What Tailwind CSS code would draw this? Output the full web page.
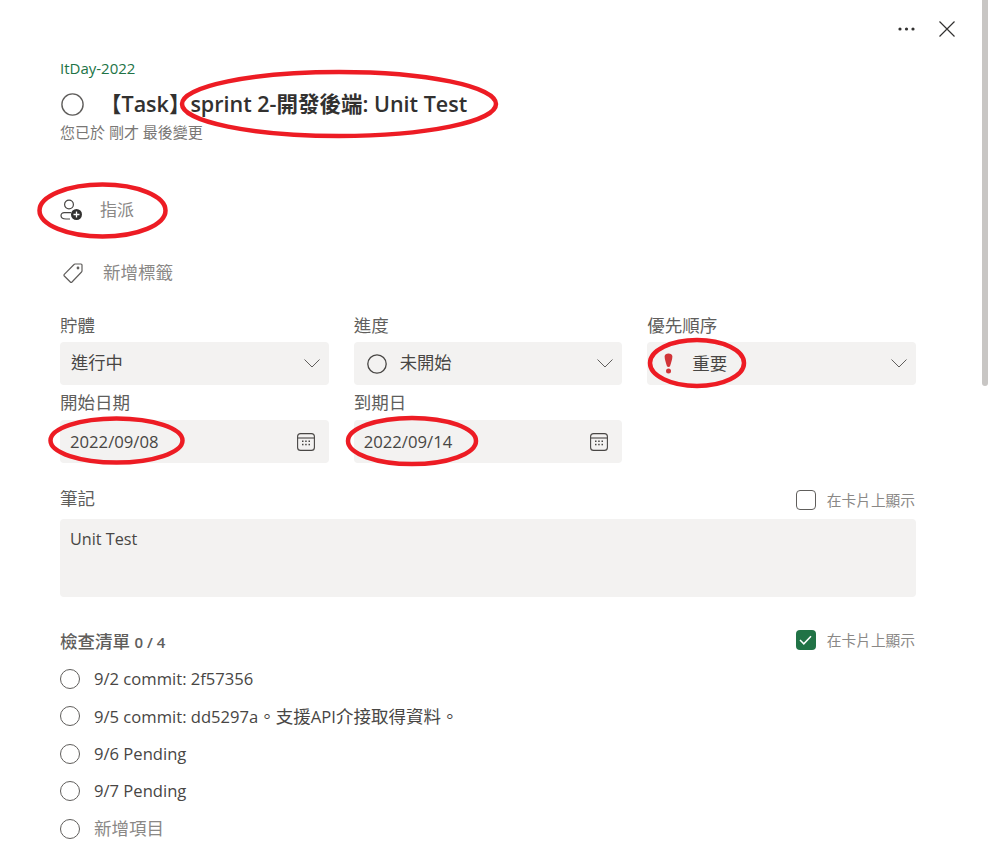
<!DOCTYPE html>
<html lang="zh-Hant">
<head>
    <meta charset="UTF-8">
    <meta name="viewport" content="width=device-width, initial-scale=1.0">
    <title>Task details</title>
    <script src="https://cdn.jsdelivr.net/npm/@tailwindcss/browser@4"></script>
</head>
<body class="bg-white">
<div class="relative w-[988px] h-[855px] overflow-hidden bg-white text-[#323130] [font-family:'Open_Sans','Noto_Sans_CJK_TC',sans-serif]">

    <!-- scrollbar -->
    <div class="absolute top-0 right-0 w-[6px] h-[386px] bg-[#c8c6c4] rounded-b-[3px]"></div>

    <!-- top actions -->
    <div class="h-[58px] pb-[1px] flex items-center justify-end gap-[24px] pr-[33px]">
        <svg class="w-[17px] h-[4px]" viewBox="0 0 17 4" fill="#323130"><circle cx="2" cy="2" r="1.6"/><circle cx="8.5" cy="2" r="1.6"/><circle cx="15" cy="2" r="1.6"/></svg>
        <svg class="w-[16px] h-[16px]" viewBox="0 0 16 16" stroke="#323130" stroke-width="1.2" fill="none"><path d="M.5.5l15 15M15.5.5l-15 15"/></svg>
    </div>

    <div class="w-[916px] pl-[60px]">
        <div class="h-[22px] pb-[2px] flex items-center text-[15px] font-medium text-[#217346]">ItDay-2022</div>

        <div class="mt-[8px] h-[32px] flex items-center">
            <svg class="w-[23px] h-[23px] ml-[1px]" viewBox="0 0 23 23" fill="none" stroke="#605e5c" stroke-width="1.4"><circle cx="11.5" cy="11.5" r="10.6"/></svg>
            <div class="ml-[16px] text-[21.5px] font-semibold whitespace-nowrap">【Task】sprint 2-開發後端: Unit Test</div>
        </div>

        <div class="mt-[2px] h-[22px] pb-[1px] flex items-center text-[15px] text-[#797775]">您已於 剛才 最後變更</div>

        <div class="mt-[46px] h-[40px] flex items-center text-[#8a8886]">
            <svg class="w-[23px] h-[22px]" viewBox="0 0 23 22" fill="none" stroke="#484644" stroke-width="1.2">
                <circle cx="9" cy="5.5" r="4.4"/>
                <path d="M11 13.6H4.2C2.4 13.6 1 14.8 1 16.5S2.4 20 6 20h4"/>
                <circle cx="16.5" cy="15.5" r="5.5" fill="#323130" stroke="none"/>
                <path d="M16.5 12.5v6M13.5 15.5h6" stroke="#fff" stroke-width="1.3"/>
            </svg>
            <span class="ml-[17px] text-[17px]">指派</span>
        </div>

        <div class="mt-[23px] h-[40px] flex items-center text-[#8a8886]">
            <svg class="w-[22px] h-[22px] ml-[2px]" viewBox="0 0 22 22" fill="none" stroke="#605e5c" stroke-width="1.2">
                <path d="M13 2h6a1 1 0 0 1 1 1v6a1.5 1.5 0 0 1-.5 1L10 20a1.2 1.2 0 0 1-1.7 0L2.3 14a1.2 1.2 0 0 1 0-1.7L12 2.5A1.5 1.5 0 0 1 13 2z"/>
                <circle cx="16" cy="6" r=".8" fill="#605e5c"/>
            </svg>
            <span class="ml-[19px] pb-[1px] text-[17.5px]">新增標籤</span>
        </div>

        <!-- fields -->
        <div class="mt-[22px] grid grid-cols-3 gap-x-[25px]">
            <div>
                <div class="h-[22px] pb-[1px] flex items-center text-[17.5px] text-[#605e5c]">貯體</div>
                <div class="mt-[5px] h-[43px] bg-[#f3f2f1] rounded-[4px] flex items-center justify-between pl-[11px] pr-[9px] text-[17.3px] text-[#484644]">
                    <span class="pb-[1px]">進行中</span>
                    <svg class="w-[16px] h-[9px]" viewBox="0 0 16 9" fill="none" stroke="#605e5c" stroke-width="1"><path d="M.5.5L8 8l7.5-7.5"/></svg>
                </div>
            </div>
            <div>
                <div class="h-[22px] pb-[1px] flex items-center text-[17.5px] text-[#605e5c]">進度</div>
                <div class="mt-[5px] h-[43px] bg-[#f3f2f1] rounded-[4px] flex items-center justify-between pl-[13px] pr-[9px] text-[17.3px] text-[#484644]">
                    <span class="flex items-center gap-[13px]">
                        <svg class="w-[20px] h-[20px]" viewBox="0 0 20 20" fill="none" stroke="#484644" stroke-width="1.3"><circle cx="10" cy="10" r="9.2"/></svg>
                        <span class="pb-[1px]">未開始</span>
                    </span>
                    <svg class="w-[16px] h-[9px]" viewBox="0 0 16 9" fill="none" stroke="#605e5c" stroke-width="1"><path d="M.5.5L8 8l7.5-7.5"/></svg>
                </div>
            </div>
            <div>
                <div class="h-[22px] pb-[1px] flex items-center text-[17.5px] text-[#605e5c]">優先順序</div>
                <div class="mt-[5px] h-[43px] bg-[#f3f2f1] rounded-[4px] flex items-center justify-between pl-[17px] pr-[9px] text-[17.5px] text-[#484644]">
                    <span class="flex items-center gap-[19px]">
                        <svg class="w-[9px] h-[21px]" viewBox="0 0 9 21" fill="#d13438"><path d="M.6 3.6C.6 1.5 2.4.4 4.5.4s3.9 1.1 3.9 3.2c0 3-1.7 7.4-2.4 9.7-.4 1-2.6 1-3 0C2.3 11 .6 6.6.6 3.6z"/><circle cx="4.5" cy="18" r="2.5"/></svg>
                        <span class="pb-[1px]">重要</span>
                    </span>
                    <svg class="w-[16px] h-[9px]" viewBox="0 0 16 9" fill="none" stroke="#605e5c" stroke-width="1"><path d="M.5.5L8 8l7.5-7.5"/></svg>
                </div>
            </div>

            <div class="mt-[7px]">
                <div class="h-[22px] pb-[1px] flex items-center text-[17.5px] text-[#605e5c]">開始日期</div>
                <div class="mt-[6px] h-[43px] bg-[#f3f2f1] rounded-[4px] flex items-center justify-between pl-[10px] pr-[14px] text-[16.7px] text-[#484644]">
                    <span>2022/09/08</span>
                    <svg class="w-[18px] h-[18px]" viewBox="0 0 18 18" fill="none" stroke="#484644" stroke-width="1.1"><rect x=".6" y=".6" width="16.8" height="16.8" rx="3"/><path d="M.6 5h16.8"/><g fill="#484644" stroke="none"><rect x="5" y="7.5" width="1.5" height="1.5"/><rect x="8.2" y="7.5" width="1.5" height="1.5"/><rect x="11.5" y="7.5" width="1.5" height="1.5"/><rect x="5" y="10.8" width="1.5" height="1.5"/><rect x="8.2" y="10.8" width="1.5" height="1.5"/><rect x="11.5" y="10.8" width="1.5" height="1.5"/></g></svg>
                </div>
            </div>
            <div class="mt-[7px]">
                <div class="h-[22px] pb-[1px] flex items-center text-[17.5px] text-[#605e5c]">到期日</div>
                <div class="mt-[6px] h-[43px] bg-[#f3f2f1] rounded-[4px] flex items-center justify-between pl-[10px] pr-[14px] text-[16.7px] text-[#484644]">
                    <span>2022/09/14</span>
                    <svg class="w-[18px] h-[18px]" viewBox="0 0 18 18" fill="none" stroke="#484644" stroke-width="1.1"><rect x=".6" y=".6" width="16.8" height="16.8" rx="3"/><path d="M.6 5h16.8"/><g fill="#484644" stroke="none"><rect x="5" y="7.5" width="1.5" height="1.5"/><rect x="8.2" y="7.5" width="1.5" height="1.5"/><rect x="11.5" y="7.5" width="1.5" height="1.5"/><rect x="5" y="10.8" width="1.5" height="1.5"/><rect x="8.2" y="10.8" width="1.5" height="1.5"/><rect x="11.5" y="10.8" width="1.5" height="1.5"/></g></svg>
                </div>
            </div>
        </div>

        <!-- notes -->
        <div class="mt-[24px] h-[22px] flex items-center justify-between">
            <span class="text-[17.5px] text-[#605e5c]">筆記</span>
            <span class="flex items-center gap-[11px] pr-[1px] translate-y-[2px] text-[14.7px] text-[#8a8886]">
                <span class="w-[20px] h-[20px] rounded-[4px] border-[1.5px] border-[#605e5c]"></span>
                在卡片上顯示
            </span>
        </div>
        <div class="mt-[10px] h-[78px] bg-[#f3f2f1] rounded-[4px] px-[10px] pt-[8px] text-[16.2px] leading-[24px] text-[#484644]">Unit Test</div>

        <!-- checklist -->
        <div class="mt-[33px] h-[22px] flex items-center justify-between">
            <span class="text-[17.5px] text-[#605e5c] font-medium">檢查清單 <span class="text-[15px] font-semibold">0 / 4</span></span>
            <span class="flex items-center gap-[11px] pr-[1px] -translate-y-[1px] text-[14.7px] text-[#8a8886]">
                <span class="w-[20px] h-[20px] rounded-[4px] bg-[#217346] flex items-center justify-center">
                    <svg class="w-[13px] h-[10px]" viewBox="0 0 13 10" fill="none" stroke="#fff" stroke-width="1.5"><path d="M1 5l3.8 3.8L12 1.2"/></svg>
                </span>
                在卡片上顯示
            </span>
        </div>
        <div class="mt-[8px] flex flex-col text-[16.6px] text-[#484644]">
            <div class="h-[37.5px] flex items-center gap-[14px]">
                <span class="w-[20px] h-[20px] rounded-full border-[1.4px] border-[#605e5c]"></span>
                <span class="pt-[1px]">9/2 commit: 2f57356</span>
            </div>
            <div class="h-[37.5px] flex items-center gap-[14px]">
                <span class="w-[20px] h-[20px] rounded-full border-[1.4px] border-[#605e5c]"></span>
                <span>9/5 commit: dd5297a<span class="text-[17.5px]">。支援</span>API<span class="text-[17.5px]">介接取得資料。</span></span>
            </div>
            <div class="h-[37.5px] flex items-center gap-[14px]">
                <span class="w-[20px] h-[20px] rounded-full border-[1.4px] border-[#605e5c]"></span>
                <span class="pt-[1px]">9/6 Pending</span>
            </div>
            <div class="h-[37.5px] flex items-center gap-[14px]">
                <span class="w-[20px] h-[20px] rounded-full border-[1.4px] border-[#605e5c]"></span>
                <span class="pt-[1px]">9/7 Pending</span>
            </div>
            <div class="h-[37.5px] flex items-center gap-[14px] text-[#8a8886]">
                <span class="w-[20px] h-[20px] rounded-full border-[1.4px] border-[#605e5c]"></span>
                <span class="pb-[1px] text-[17.5px]">新增項目</span>
            </div>
        </div>
    </div>

    <!-- red annotation ellipses drawn over the page -->
    <svg class="absolute inset-0 w-[988px] h-[855px] pointer-events-none" viewBox="0 0 988 855" fill="none" stroke="#ed1c24" stroke-width="4.5">
        <ellipse cx="339" cy="104" rx="157" ry="32"/>
        <ellipse cx="102.5" cy="210.5" rx="63" ry="26"/>
        <ellipse cx="697" cy="363" rx="47" ry="23"/>
        <ellipse cx="116.5" cy="440.5" rx="66" ry="22"/>
        <ellipse cx="412" cy="441" rx="64" ry="23"/>
    </svg>
</div>
</body>
</html>
